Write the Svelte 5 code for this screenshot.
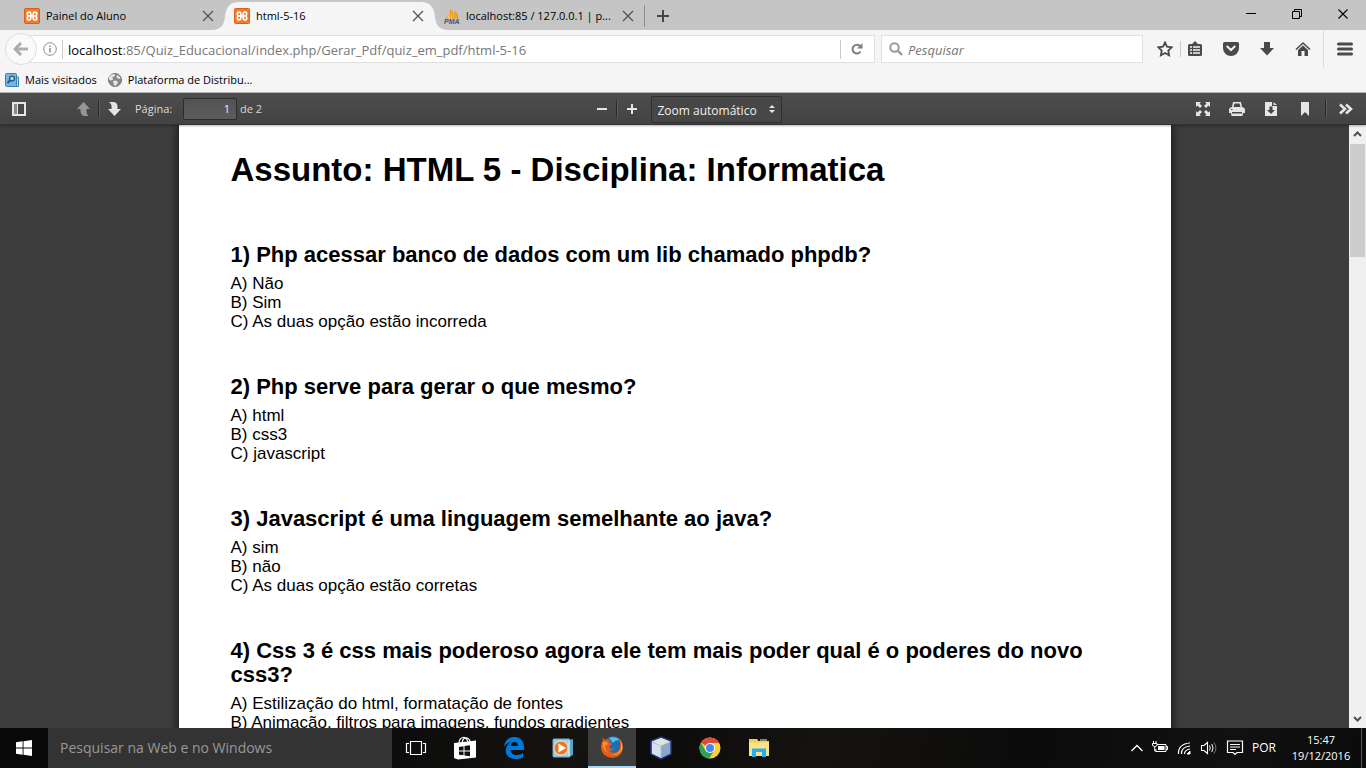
<script>
  const tabs = [
    { title: 'Painel do Aluno', icon: 'xampp', active: false },
    { title: 'html-5-16', icon: 'xampp', active: true },
    { title: 'localhost:85 / 127.0.0.1 | p...', icon: 'pma', active: false }
  ];
  const questions = [
    { title: '1) Php acessar banco de dados com um lib chamado phpdb?', answers: ['A) Não', 'B) Sim', 'C) As duas opção estão incorreda'] },
    { title: '2) Php serve para gerar o que mesmo?', answers: ['A) html', 'B) css3', 'C) javascript'] },
    { title: '3) Javascript é uma linguagem semelhante ao java?', answers: ['A) sim', 'B) não', 'C) As duas opção estão corretas'] },
    { title: '4) Css 3 é css mais poderoso agora ele tem mais poder qual é o poderes do novo css3?', answers: ['A) Estilização do html, formatação de fontes', 'B) Animação, filtros para imagens, fundos gradientes'] }
  ];
</script>

<div class="screen">
  <header class="tabstrip">
    <div class="tabs" role="tablist">
      {#each tabs as tab}
        <div class="tab" class:active={tab.active} role="tab" aria-selected={tab.active} tabindex="0">
          {#if tab.active}
            <div class="shape" aria-hidden="true">
              <svg width="26" height="28" viewBox="0 0 26 28"><path d="M0 28C9 27 11 22 12 15C13 5 17 0 26 0V28Z" fill="#f5f5f5" /></svg>
              <span></span>
              <svg width="26" height="28" viewBox="0 0 26 28"><path d="M26 28C17 27 15 22 14 15C13 5 9 0 0 0V28Z" fill="#f5f5f5" /></svg>
            </div>
          {/if}
          {#if tab.icon === 'xampp'}
            <svg class="fav" width="16" height="16" viewBox="0 0 16 16">
              <rect x=".5" y=".5" width="15" height="15" rx="1" fill="#f47a2c" stroke="#d9611a" />
              <path d="M5 7.900H11M6.300 4.200H5Q3.300 4.200 3.300 5.800Q3.300 7.500 4.500 8Q3.300 8.500 3.300 10.200Q3.300 11.900 5 11.900Q6.800 11.900 6.800 10V6Q6.800 4.200 5.500 4.200M9.700 4.200H11Q12.700 4.200 12.700 5.800Q12.700 7.500 11.500 8Q12.700 8.500 12.700 10.200Q12.700 11.900 11 11.900Q9.200 11.900 9.200 10V6Q9.200 4.200 10.500 4.200" fill="none" stroke="#fff" stroke-width="1.700" />
            </svg>
          {:else}
            <svg class="fav" width="16" height="16" viewBox="0 0 16 16">
              <path d="M1 10.500C4 9 5 6 5.500 3V10.500ZM6 10.500V1C9 3 10 6 10 10.500ZM10.500 10.500V2.500C13 4 14.500 7 14.500 10.500Z" fill="#f89c0e" />
              <path d="M3 10C4.500 8 5 6 5.500 3V10ZM8 10L7 4V10Z" fill="#fcc987" />
              <text x="0" y="15.500" font-size="7" font-family="Liberation Sans, sans-serif" font-weight="700" font-style="italic" fill="#4d4d79">PMA</text>
            </svg>
          {/if}
          <span class="title">{tab.title}</span>
          <button class="close" aria-label="Fechar aba"><svg width="16" height="16" viewBox="0 0 16 16"><path d="M3 3L13 13M13 3L3 13" stroke="#505050" stroke-width="1.200" /></svg></button>
        </div>
      {/each}
      <button class="new" aria-label="Nova aba"><svg width="14" height="14" viewBox="0 0 14 14"><path d="M7 1V13M1 7H13" stroke="#444" stroke-width="2" /></svg></button>
    </div>
    <div class="controls">
      <button aria-label="Minimizar"><svg width="12" height="12" viewBox="0 0 12 12"><path d="M1 5.500H11" stroke="#000" /></svg></button>
      <button aria-label="Restaurar"><svg width="12" height="12" viewBox="0 0 12 12"><path d="M1.500 3.500H8.500V10.500H1.500ZM3.500 3.500V1.500H10.500V8.500H8.500" fill="none" stroke="#000" /></svg></button>
      <button aria-label="Fechar"><svg width="12" height="12" viewBox="0 0 12 12"><path d="M1.500 1.500L10.500 10.500M10.500 1.500L1.500 10.500" stroke="#000" stroke-width="1.100" /></svg></button>
    </div>
  </header>

  <nav class="navbar">
    <button class="back" aria-label="Voltar"><svg width="16" height="14" viewBox="0 0 16 14"><path d="M8 1L2 7L8 13M2.500 7H15" fill="none" stroke="#adadad" stroke-width="3" /></svg></button>
    <div class="urlbar">
      <svg width="14" height="14" viewBox="0 0 14 14"><circle cx="7" cy="7" r="6.300" fill="none" stroke="#8c8c8c" /><path d="M7 6V10.500M7 3.500V5" stroke="#8c8c8c" stroke-width="1.500" /></svg>
      <i class="vline"></i>
      <div class="url" role="textbox" aria-label="Endereço" tabindex="0" contenteditable="false"><b>localhost</b>:85/Quiz_Educacional/index.php/Gerar_Pdf/quiz_em_pdf/html-5-16</div>
      <i class="vline"></i>
      <button class="reload" aria-label="Recarregar"><svg width="14" height="14" viewBox="0 0 14 14"><path d="M10.500 9.500A4.300 4.300 0 1 1 9.800 4" fill="none" stroke="#7d7d7d" stroke-width="2" /><path d="M12.500 1V6.500H7Z" fill="#7d7d7d" /></svg></button>
    </div>
    <label class="search">
      <svg width="14" height="14" viewBox="0 0 14 14"><circle cx="5.500" cy="5.500" r="4.200" fill="none" stroke="#999" stroke-width="2" /><path d="M8.500 8.500L13 13" stroke="#999" stroke-width="2.400" /></svg>
      <input type="text" placeholder="Pesquisar" aria-label="Pesquisar" />
    </label>
    <div class="tools">
      <button aria-label="Favoritar" class="star"><svg width="16" height="16" viewBox="0 0 16 16"><path d="M8 1.500L10 5.700L14.700 6.300L11.300 9.500L12.100 14.300L8 12L3.900 14.300L4.700 9.500L1.300 6.300L6 5.700Z" fill="none" stroke="#4a4a4a" stroke-width="1.800" /></svg></button>
      <i class="vline"></i>
      <button aria-label="Favoritos"><svg width="16" height="16" viewBox="0 0 16 16"><path d="M5 3L8 0L11 3H13.500Q15 3 15 4.500V13.500Q15 15 13.500 15H2.500Q1 15 1 13.500V4.500Q1 3 2.500 3Z" fill="#4a4a4a" /><path d="M3 6H5M6 6H13M3 9H5M6 9H13M3 12H5M6 12H13" stroke="#f5f5f5" stroke-width="1.500" /></svg></button>
      <button aria-label="Pocket"><svg width="16" height="16" viewBox="0 0 16 16"><path d="M1.500 1H14.500Q16 1 16 2.500V7A8 8 0 0 1 0 7V2.500Q0 1 1.500 1Z" fill="#4a4a4a" /><path d="M4.300 5.500L8 9L11.700 5.500" fill="none" stroke="#f5f5f5" stroke-width="2" stroke-linecap="round" /></svg></button>
      <button aria-label="Downloads"><svg width="16" height="16" viewBox="0 0 16 16"><path d="M5 1H11V7H15L8 14.500L1 7H5Z" fill="#4a4a4a" /></svg></button>
      <button aria-label="Página inicial"><svg width="16" height="16" viewBox="0 0 16 16"><path d="M1 8.500L8 2L15 8.500" fill="none" stroke="#4a4a4a" stroke-width="1.600" /><path d="M3 9L8 4.500L13 9V15H9.500V10H6.500V15H3Z" fill="#4a4a4a" /></svg></button>
      <button aria-label="Menu" class="menu"><svg width="16" height="16" viewBox="0 0 16 16"><path d="M1.500 3H14.500M1.500 8H14.500M1.500 13H14.500" stroke="#4a4a4a" stroke-width="3" stroke-linecap="round" /></svg></button>
    </div>
  </nav>

  <div class="bookmarks">
    <a href="#mais-visitados">
      <svg width="14" height="16" viewBox="0 0 14 16"><path d="M9 5H13.500V14.500H9Z" fill="#b3dcf2" stroke="#3a83b4" /><rect x=".5" y="1.500" width="11" height="13" rx="1" fill="#75b6e0" stroke="#3a83b4" /><circle cx="7" cy="6.500" r="2.400" fill="#b9ddf2" stroke="#235b85" stroke-width="1.400" /><path d="M5.200 8.300L2.500 11" stroke="#235b85" stroke-width="2" /></svg>
      Mais visitados
    </a>
    <a href="#plataforma">
      <svg width="14" height="14" viewBox="0 0 14 14"><circle cx="7" cy="7" r="6.500" fill="#888" stroke="#777" /><path d="M1 4L4 1.500L6.500 1L7 3L4.500 4L5 6.500L3 7.500L1 6.500ZM9 2L12 4L12.500 6L10 5.500L8.500 4ZM5 8L8 7.500L10 9L8.500 12L6.500 13L5.500 10.500Z" fill="#e8e8e8" /></svg>
      Plataforma de Distribu...
    </a>
  </div>

  <div class="pdfbar">
    <div class="group left">
      <button aria-label="Painel lateral" class="side"><svg width="14" height="14" viewBox="0 0 14 14"><path d="M1 1H13V13H1Z" fill="none" stroke="#e6e6e6" stroke-width="2" /><path d="M2 2H5V12H2Z" fill="#8a8a8a" /><path d="M5.500 1V13" stroke="#e6e6e6" /></svg></button>
      <button aria-label="Página anterior"><svg width="16" height="16" viewBox="0 0 16 16"><path d="M7.500 1L14 8H10.500V11.500Q11 14 13 15H8Q5 14 4.500 11V8H1Z" fill="#969696" /></svg></button>
      <i class="split"></i>
      <button aria-label="Próxima página"><svg width="16" height="16" viewBox="0 0 16 16"><path d="M8.500 15L15 8H11.500V5Q11 1 7 1H3Q5 2 5.500 4.500V8H2Z" fill="#e6e6e6" /></svg></button>
      <label for="page">Página:</label>
      <input id="page" type="text" value="1" />
      <span>de 2</span>
    </div>
    <div class="group middle">
      <button aria-label="Reduzir"><svg width="12" height="12" viewBox="0 0 12 12"><path d="M1 6H11" stroke="#e6e6e6" stroke-width="2" /></svg></button>
      <i class="split"></i>
      <button aria-label="Ampliar"><svg width="12" height="12" viewBox="0 0 12 12"><path d="M1 6H11M6 1V11" stroke="#e6e6e6" stroke-width="2" /></svg></button>
      <div class="zoom">
        <select aria-label="Zoom"><option>Zoom automático</option></select>
        <svg width="6" height="10" viewBox="0 0 6 10"><path d="M0 4L3 1L6 4ZM0 6L3 9L6 6Z" fill="#e6e6e6" /></svg>
      </div>
    </div>
    <div class="group right">
      <button aria-label="Apresentação"><svg width="16" height="16" viewBox="0 0 16 16"><path d="M1 1H6L4.500 2.500L7 5L5 7L2.500 4.500L1 6ZM15 1V6L13.500 4.500L11 7L9 5L11.500 2.500L10 1ZM1 15V10L2.500 11.500L5 9L7 11L4.500 13.500L6 15ZM15 15H10L11.500 13.500L9 11L11 9L13.500 11.500L15 10Z" fill="#e6e6e6" /></svg></button>
      <button aria-label="Imprimir"><svg width="16" height="16" viewBox="0 0 16 16"><path d="M3 6L4 1H12L13 6Q16 6.500 16 9V12H14L13.500 15H2.500L2 12H0V9Q0 6.500 3 6Z" fill="#e6e6e6" /><path d="M4.500 6L5.500 2.500H10.500L11.500 6ZM3 11H13V12.500H3ZM2 8H3.500V9H2Z" fill="#484848" /></svg></button>
      <button aria-label="Baixar"><svg width="16" height="16" viewBox="0 0 16 16"><path d="M2 1H9V5H14V15H2ZM10.500 1L14 4H10.500Z" fill="#e6e6e6" /><path d="M6.500 5.500H9.500V9H12L8 13L4 9H6.500Z" fill="#444" /></svg></button>
      <button aria-label="Marcador"><svg width="16" height="16" viewBox="0 0 16 16"><path d="M4 1H12V15L8 11L4 15Z" fill="#e6e6e6" /></svg></button>
      <i class="split"></i>
      <button aria-label="Ferramentas"><svg width="16" height="14" viewBox="0 0 16 14"><path d="M2 2.500L7 7L2 11.500M8 2.500L13 7L8 11.500" fill="none" stroke="#e6e6e6" stroke-width="2.600" /></svg></button>
    </div>
  </div>

  <main class="viewer">
    <div class="desk">
      <article class="paper">
        <h1>Assunto: HTML 5 - Disciplina: Informatica</h1>
        {#each questions as q}
          <section>
            <h2>{q.title}</h2>
            {#each q.answers as a}<p>{a}</p>{/each}
          </section>
        {/each}
      </article>
    </div>
    <div class="scroll" aria-hidden="true">
      <svg width="9" height="6" viewBox="0 0 9 6"><path d="M1 5L4.500 1.500L8 5" fill="none" stroke="#505050" stroke-width="2" /></svg>
      <div class="track"><div class="thumb"></div></div>
      <svg width="9" height="6" viewBox="0 0 9 6"><path d="M1 1L4.500 4.500L8 1" fill="none" stroke="#505050" stroke-width="2" /></svg>
    </div>
  </main>

  <footer class="taskbar">
    <button class="start" aria-label="Iniciar"><svg width="16" height="16" viewBox="0 0 16 16"><path d="M0 2.300L6.600 1.300V7.500H0ZM7.500 1.200L16 0V7.500H7.500ZM0 8.500H6.600V14.700L0 13.700ZM7.500 8.500H16V16L7.500 14.800Z" fill="#fff" /></svg></button>
    <input class="find" type="text" placeholder="Pesquisar na Web e no Windows" aria-label="Pesquisar na Web e no Windows" />
    <div class="apps">
      <button aria-label="Visão de tarefas"><svg width="22" height="16" viewBox="0 0 22 16"><path d="M5.500 1.500H16.500V14.500H5.500ZM4 3.500H1.500V12.500H4M18 3.500H20.500V12.500H18" fill="none" stroke="#fff" stroke-width="1.200" /></svg></button>
      <button aria-label="Loja"><svg width="24" height="24" viewBox="0 0 24 24"><path d="M1 7.500L23 5V22L5 24L1 22.500Z" fill="#fff" transform="translate(0 -.5)" /><path d="M6 8Q6 2 10 1.500Q14 1 15 7M9 7Q10 1 14 2Q17 3 17 6" fill="none" stroke="#fff" stroke-width="1.200" /><path d="M6 11L10.500 10.300V14.500H6ZM11.500 10.100L17 9.300V14.500H11.500ZM6 15.500H10.500V19.300L6 18.700ZM11.500 15.500H17V20.200L11.500 19.500Z" fill="#111" /></svg></button>
      <button aria-label="Edge"><svg width="22" height="24" viewBox="0 0 22 24"><path d="M1 11C2 4 6 1 11.500 1C18 1 21 6 21 11V14H7.500C7.800 17 10 19 13.500 19C16.500 19 18.500 18 20 17V21.500C18 22.600 15.500 23 12.500 23C6 23 2.700 19 2.700 14.500C2.700 10.500 5 7.500 8.500 6C5 6.500 2.500 8.500 1 11ZM7.600 10H15C15 7.500 14 6 11.600 6C9 6 7.900 8 7.600 10Z" fill="#0078d7" /></svg></button>
      <button aria-label="Media Player"><svg width="22" height="20" viewBox="0 0 22 20"><path d="M17 2L21 1V17L17 19Z" fill="#4fa6cf" /><rect x="1" y="1" width="17" height="18" rx="1" fill="#a7cfe2" stroke="#6fa9c6" /><path d="M17 3V18" stroke="#e3f3fb" /><circle cx="9" cy="10" r="7" fill="#f0761d" stroke="#dce8ee" /><path d="M6.500 5.500L14 10L6.500 14.500Z" fill="#fff" /></svg></button>
      <button class="on" aria-label="Firefox"><svg width="24" height="24" viewBox="0 0 24 24"><circle cx="13" cy="11" r="9.800" fill="#1d6fae" /><path d="M9 3Q15 0 20 5Q15 5 13 8Z" fill="#56b9e6" /><path d="M2 3Q4 3.500 5 5Q7 4 9.500 5Q8.500 7 11 8Q13 9 11 10Q9 11 9.500 13Q11 14.500 14 13Q13 16 9.500 15.500Q12 19 17 17Q21 14 20 8L18.500 3Q23 7 23 13Q22 22 12.500 23Q2 22 1 13Q1 8 3 6Z" fill="#e65a1b" /><path d="M20 5Q22 8 21 14Q18 21 10 19Q18 22 22 14Q23 9 20 5Z" fill="#ffd43e" /><path d="M2.500 7Q7 6 8 9L5 11Q5 15 8 18Q2 15 2.500 7Z" fill="#f7952b" /></svg></button>
      <button aria-label="NetBeans"><svg width="22" height="24" viewBox="0 0 22 24"><path d="M11 1L21 5V18L11 23L1 18V5Z" fill="#a9bdd3" stroke="#27327d" stroke-width="1.500" /><path d="M2 5.500L11 2L20 5.500L11 9.500Z" fill="#d8e8dc" /><path d="M2 6.500L10.500 10V21.500L2 17.500Z" fill="#d6e1ef" /><path d="M11.500 10L20 6.500V17.500L11.500 21.500Z" fill="#8ca7c7" /></svg></button>
      <button aria-label="Chrome"><svg width="22" height="22" viewBox="0 0 22 22"><circle cx="11" cy="11" r="10.500" fill="#f9cf3c" /><path d="M11 11L1.900 5.700A10.500 10.500 0 0 1 20.200 6H11Z" fill="#e04a3c" /><path d="M1.900 5.700A10.500 10.500 0 0 0 10 21.500L15 13.500L6.500 13.500Z" fill="#2ea157" /><circle cx="11" cy="11" r="5" fill="#fff" /><circle cx="11" cy="11" r="4" fill="#4587ee" /></svg></button>
      <button aria-label="Explorador de Arquivos"><svg width="22" height="20" viewBox="0 0 22 20"><path d="M1 1H9L10.500 3H21V18H1Z" fill="#f5cc5a" /><path d="M1 4.500H21V18H1Z" fill="#fde28c" /><path d="M4 19V10.500H18V19H14V14H8V19Z" fill="#25aef0" /><path d="M12 2H19" stroke="#fff2c2" /></svg></button>
    </div>
    <div class="tray">
      <button aria-label="Mostrar ícones ocultos"><svg width="14" height="16" viewBox="0 0 14 16"><path d="M1.500 11L7 5.500L12.500 11" fill="none" stroke="#fff" stroke-width="1.300" /></svg></button>
      <button aria-label="Bateria"><svg width="16" height="16" viewBox="0 0 16 16"><path d="M5 4.500H14V11.500H4V9M14 6.500H15.500V9.500H14" fill="none" stroke="#fff" /><path d="M6 6H12.500V10H6Z" fill="#fff" /><path d="M1.500 1V3M4 1V3M.5 3.500H5V5.500Q3 8 .5 5.500ZM2.700 7V11H4" fill="none" stroke="#fff" /></svg></button>
      <button aria-label="Rede"><svg width="16" height="16" viewBox="0 0 16 16"><path d="M2.500 14Q2 4 14 3M5.500 14Q5 7 14 6M8.500 14Q8.500 10 14 9" fill="none" stroke="#fff" stroke-width="1.200" /><path d="M11 14L14 11V14Z" fill="#fff" stroke="#fff" /></svg></button>
      <button aria-label="Volume"><svg width="18" height="16" viewBox="0 0 18 16"><path d="M1.500 5.500H4L7.500 2.500V13.500L4 10.500H1.500Z" fill="none" stroke="#fff" stroke-width="1.100" /><path d="M9.500 5.500Q11 8 9.500 10.500M11.800 4Q14.300 8 11.800 12" fill="none" stroke="#fff" /><path d="M14 2.500Q17.800 8 14 13.500" fill="none" stroke="#777" /></svg></button>
      <button aria-label="Central de ações"><svg width="18" height="16" viewBox="0 0 18 16"><path d="M1.500 1H16.500V12.500H11L9 14.500L7 12.500H1.500ZM4 4.500H14M4 7H14M4 9.500H10" fill="none" stroke="#fff" stroke-width="1.200" /></svg></button>
      <span class="lang">POR</span>
      <div class="clock"><span>15:47</span><span>19/12/2016</span></div>
      <i class="peek"></i>
    </div>
  </footer>
</div>

<style>
  :global(body) { margin: 0; overflow: hidden; }
  .screen, .screen * { box-sizing: border-box; }
  .screen { height: 100vh; display: flex; flex-direction: column; font: 11px/16px "Open Sans", "Noto Sans", sans-serif; color: #000; background: #3c3c3c; }
  button { display: grid; place-items: center; border: 0; padding: 0; margin: 0; background: none; flex: none; }
  input, select { font: inherit; border: 0; padding: 0; margin: 0; background: none; outline: 0; }
  svg { display: block; flex: none; }
  .tabstrip { display: flex; justify-content: space-between; height: 30px; flex: none; background: #c5c5c5; }
  .tabs { display: flex; padding-left: 14px; }
  .tab { position: relative; width: 210px; display: flex; align-items: center; gap: 6px; padding: 2px 8px 0 10px; }
  .tab.active { z-index: 1; }
  .tab > * { position: relative; }
  .tab > .shape { position: absolute; inset: 2px -13px 0 -11px; display: flex; }
  .shape span { flex: 1; background: #f5f5f5; }
  .title { flex: 1; white-space: nowrap; overflow: hidden; }
  .new { width: 37px; height: 22px; margin-top: 5px; border-left: 1px solid #8f8f8f; }
  .controls { display: flex; }
  .controls button { width: 46px; height: 28px; }

  .navbar { display: flex; height: 38px; flex: none; align-items: center; background: #f5f5f5; padding-left: 5px; }
  .back { z-index: 1; width: 32px; height: 32px; border: 1px solid #ddd; border-radius: 50%; background: #fafafa; }
  .urlbar { flex: 1; display: flex; align-items: center; height: 28px; margin-left: -8px; padding-left: 13px; border: 1px solid #e0e0e0; background: #fff; }
  .vline { width: 1px; height: 19px; background: #cacaca; margin: 0 5px; flex: none; }
  .url { flex: 1; padding-top: 2px; font-size: 13px; line-height: 20px; color: #777; white-space: nowrap; overflow: hidden; min-width: 0; }
  .url b { color: #000; font-weight: 400; }
  .reload { width: 22px; height: 24px; margin-right: 6px; }
  .search { display: flex; align-items: center; gap: 5px; width: 262px; height: 28px; margin-left: 6px; padding-left: 7px; border: 1px solid #e0e0e0; background: #fff; }
  .search input { flex: 1; min-width: 0; padding-top: 2px; font-size: 13px; font-style: italic; }
  .search input::placeholder { color: #777; opacity: 1; }
  .tools { display: flex; align-items: center; padding-left: 10px; align-self: stretch; }
  .tools button { width: 36px; height: 38px; }
  .tools .star { width: 23px; }
  .tools .vline { margin: 0 -4px 0 4px; height: 16px; }
  .tools .menu { width: 43px; margin-left: 2px; border-left: 1px solid #dcdcdc; }

  .bookmarks { display: flex; gap: 11px; align-items: center; height: 25px; flex: none; padding-left: 5px; background: #f5f5f5; border-bottom: 1px solid #b8b8b8; }
  .bookmarks a { display: flex; align-items: center; gap: 6px; color: #000; text-decoration: none; }

  .pdfbar { display: grid; grid-template-columns: 1fr auto 1fr; height: 32px; flex: none; color: #d9d9d9; background: linear-gradient(#4d4d4d, #434343); border-bottom: 1px solid #333; box-shadow: 0 1px 2px rgba(0, 0, 0, .3); z-index: 2; }
  .group { display: flex; align-items: center; }
  .group button { width: 28px; height: 26px; }
  .group .side { width: 30px; margin: 0 36px 0 4px; }
  .split { width: 2px; height: 17px; background: #292929; border-right: 1px solid #5c5c5c; }
  .left label { margin-left: 7px; width: 48px; }
  .left input { width: 54px; height: 22px; margin-right: 3px; padding-right: 6px; text-align: right; color: #f0f0f0; border: 1px solid #2c2c2c; border-radius: 2px; background: linear-gradient(#535353, #5c5c5c); }
  .middle { padding-left: 3px; }
  .zoom { position: relative; margin-left: 5px; }
  .zoom select { display: block; width: 131px; height: 27px; padding: 2px 20px 0 6px; appearance: none; color: #f0f0f0; font-size: 12px; background: #474747; border: 1px solid #2f2f2f; border-radius: 2px; margin-top: 2px; }
  .zoom svg { position: absolute; right: 7px; top: 10px; }
  .right { justify-content: flex-end; padding-right: 6px; gap: 6px; }
  .right .split { margin-right: -1px; }

  .viewer { display: flex; flex: 1; min-height: 0; }
  .desk { flex: 1; min-width: 0; overflow: hidden; background: #3d3d3d; }
  .paper { max-width: 992px; min-height: 100%; margin: 0 auto; padding: 25px 52px; background: #fff; box-shadow: 0 0 8px 2px rgba(0, 0, 0, .55); font: 17px/19px "Liberation Sans", Arial, sans-serif; }
  h1, h2, p { margin: 0; }
  h1 { font-size: 33px; line-height: 40px; margin-bottom: 53px; }
  h2 { font-size: 22px; line-height: 24px; margin-bottom: 7px; }
  section { margin-bottom: 44px; }
  .scroll { width: 17px; display: flex; flex-direction: column; align-items: center; padding: 6px 0; background: #f0f0f0; }
  .track { flex: 1; align-self: stretch; padding: 7px 1px; }
  .thumb { height: 20%; background: #cdcdcd; }

  .taskbar { display: flex; height: 40px; flex: none; color: #fff; background: linear-gradient(105deg, #090909, #0d0d0d 30%, #15130f 42%, #0c0c0c 48%, #15130f 60%, #0b0b0b 75%, #111 90%, #0b0b0b); z-index: 2; }
  .start { width: 48px; }
  .find { width: 344px; padding-left: 12px; background: #333; font-size: 14px; color: #fff; }
  .find::placeholder { color: #989898; opacity: 1; }
  .apps { display: flex; gap: 1px; flex: 1; }
  .apps button { width: 48px; }
  .apps .on { background: #3d3d3d; border-bottom: 2px solid #a5d8f6; }
  .tray { display: flex; align-items: center; gap: 8px; padding-right: 4px; }
  .lang { width: 24px; font-size: 12px; }
  .clock { width: 64px; margin-left: 5px; text-align: center; }
  .clock span { display: block; }
  .peek { align-self: stretch; width: 1px; background: #555; }
</style>
